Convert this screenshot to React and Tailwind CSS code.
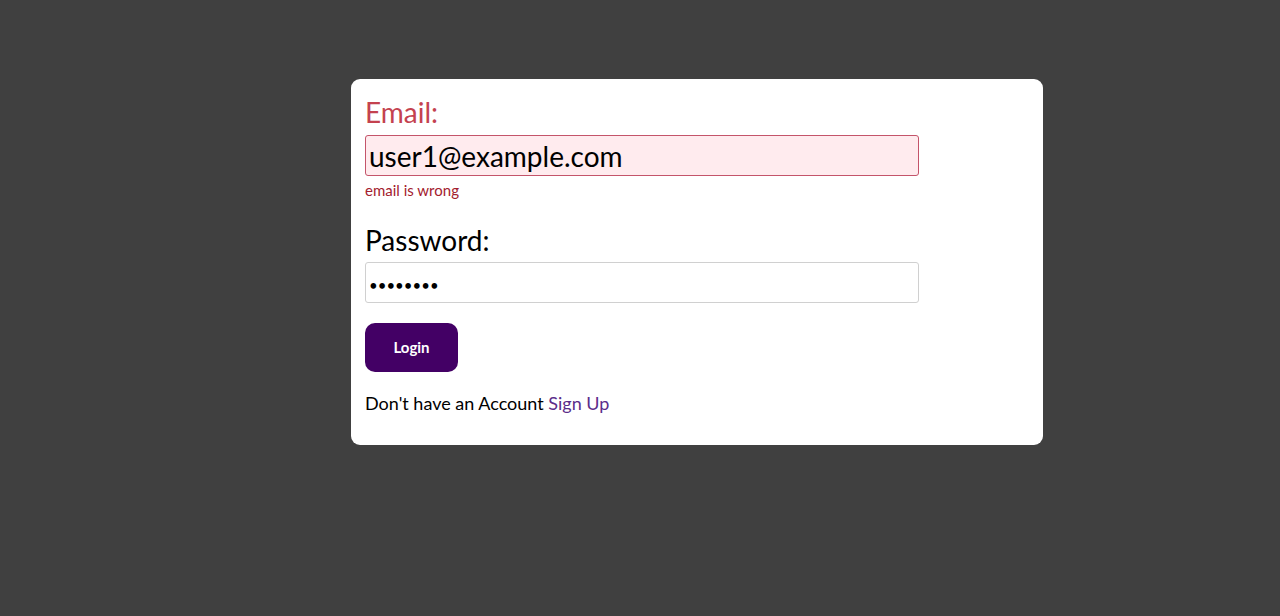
import React, { useState } from 'react';

const App = () => {
  const [email, setEmail] = useState('user1@example.com');
  const [password, setPassword] = useState('password');

  return (
    <div className="min-h-screen w-full bg-[#404040] pt-[79px] pl-[351px]" style={{ fontFamily: 'Lato, "Noto Sans", sans-serif' }}>
      <form
        onSubmit={(e) => e.preventDefault()}
        className="w-[692px] rounded-[9px] bg-white px-[14px] pt-[16px] pb-[30px]"
      >
        <label className="block text-[28px] leading-[34px] text-[#c4424f] mb-[6px]">Email:</label>
        <input
          type="text"
          value={email}
          onChange={(e) => setEmail(e.target.value)}
          className="block w-[554px] h-[41px] rounded-[3px] border border-[#c4546a] bg-[#ffebee] px-[3px] text-[28px] text-black focus:outline-none"
        />
        <p className="mt-[4px] text-[15px] leading-[20px] text-[#a3202e]">email is wrong</p>

        <label className="block mt-[23px] text-[28px] leading-[34px] text-black mb-[5px]">Password:</label>
        <input
          type="password"
          value={password}
          onChange={(e) => setPassword(e.target.value)}
          className="block w-[554px] h-[41px] rounded-[3px] border border-[#d0d0d0] bg-white px-[3px] pt-[5px] text-[15px] text-black focus:outline-none"
        />

        <button
          type="submit"
          className="mt-[20px] block w-[93px] h-[49px] rounded-[10px] bg-[#430065] text-[15px] font-bold text-white"
        >
          Login
        </button>

        <p className="mt-[19px] text-[18px] leading-[24px] text-black">
          Don't have an Account <a href="#" className="text-[#5b2d8a]">Sign Up</a>
        </p>
      </form>
    </div>
  );
};

export default App;
